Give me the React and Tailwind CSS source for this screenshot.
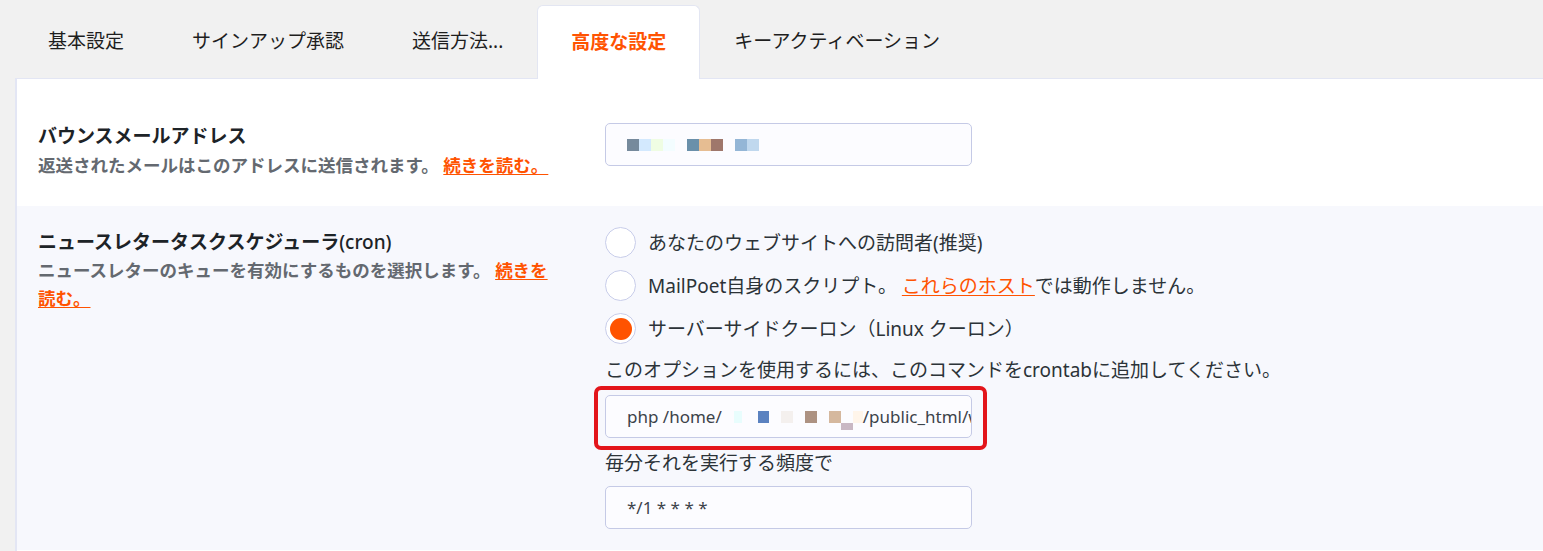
import React from "react";

const font = { fontFamily: '"Noto Sans", "Noto Sans CJK JP", sans-serif' };

const tabs = ["基本設定", "サインアップ承認", "送信方法...", "高度な設定", "キーアクティベーション"];

function Px({ c, w = "w-[12px]", h = "h-[12px]", className = "" }) {
  return <span className={`inline-block shrink-0 ${w} ${h} ${className}`} style={{ background: c }} />;
}

function Gap({ w = "w-[12px]" }) {
  return <span className={`inline-block shrink-0 ${w}`} />;
}

function Radio({ checked, children }) {
  return (
    <label className="flex items-center h-[43px] gap-[12px] cursor-pointer">
      <span className="w-[31px] h-[31px] rounded-full border border-[#c8cdea] bg-white flex items-center justify-center shrink-0">
        {checked && <span className="w-[22px] h-[22px] rounded-full bg-[#ff5301]" />}
      </span>
      <span className="text-[19px] text-[#2c3338] leading-[28px]">{children}</span>
    </label>
  );
}

export default function App() {
  return (
    <div className="min-h-screen bg-[#f1f1f1] overflow-hidden" style={font}>
      {/* Tabs */}
      <nav className="flex pl-[14px] pt-[5px]">
        {tabs.map((t) =>
          t === "高度な設定" ? (
            <div
              key={t}
              className="relative z-10 -mb-px h-[74px] px-[33px] flex items-center bg-white border border-b-0 border-[#e3e6f2] rounded-t-[6px] text-[19px] font-bold text-[#ff5301]"
            >
              {t}
            </div>
          ) : (
            <div key={t} className="h-[73px] px-[34px] flex items-center text-[19px] text-[#1e1e1e]">
              {t}
            </div>
          )
        )}
      </nav>

      {/* Panel */}
      <div className="ml-[15px] border-l-2 border-t border-[#e3e6f4] bg-white">
        {/* Bounce address */}
        <div className="flex h-[127px] pt-[43px] bg-white">
          <div className="w-[588px] pl-[21px] shrink-0">
            <h3 className="text-[19px] font-bold text-[#1d2327] leading-[29px]">バウンスメールアドレス</h3>
            <p className="text-[17.5px] font-semibold text-[#646970] leading-[29px]">
              返送されたメールはこのアドレスに送信されます。{" "}
              <a href="#" className="text-[#ff5301] underline underline-offset-2">続きを読む。</a>
            </p>
          </div>
          <div className="mt-[1px] w-[367px] h-[43px] rounded-[5px] border border-[#c5cae6] bg-[#fcfcff] flex items-center pl-[21px]">
            <Px c="#768a9c" />
            <Px c="#d3e9fe" />
            <Px c="#effde3" />
            <Px c="#f3fdff" />
            <Gap />
            <Px c="#6a90aa" />
            <Px c="#e6bd92" />
            <Px c="#9f776b" />
            <Gap />
            <Px c="#94b6d6" />
            <Px c="#c0d8ee" />
          </div>
        </div>

        {/* Cron */}
        <div className="flex bg-[#f7f8fd] pt-[15px] pb-[21px]">
          <div className="w-[588px] pl-[21px] pt-[7px] shrink-0">
            <h3 className="text-[19px] font-bold text-[#1d2327] leading-[28px]">
              ニュースレタータスクスケジューラ<span className="font-medium">(cron)</span>
            </h3>
            <p className="text-[17.5px] font-semibold text-[#646970] leading-[28px]">
              ニュースレターのキューを有効にするものを選択します。{" "}
              <a href="#" className="text-[#ff5301] underline underline-offset-2">
                続きを
                <br />
                読む。
              </a>
            </p>
          </div>
          <div className="flex flex-col">
            <Radio>あなたのウェブサイトへの訪問者(推奨)</Radio>
            <Radio>
              MailPoet自身のスクリプト。{" "}
              <a href="#" className="text-[#ff5301] underline underline-offset-2">これらのホスト</a>では動作しません。
            </Radio>
            <Radio checked>サーバーサイドクーロン（Linux クーロン）</Radio>

            <p className="mt-[6px] text-[19px] text-[#2c3338] leading-[28px]">
              このオプションを使用するには、このコマンドをcrontabに追加してください。
            </p>

            <div className="relative mt-[11px] w-[367px]">
              <div className="h-[43px] rounded-[5px] border border-[#c5cae6] bg-[#fcfcff] flex items-center pl-[21px] overflow-hidden whitespace-nowrap text-[17px] text-[#3c434a]">
                <span className="shrink-0">php /home/</span>
                <Gap />
                <Px c="#e8fdfd" w="w-[8px]" />
                <Gap w="w-[16px]" />
                <Px c="#5b82c0" w="w-[11px]" />
                <Gap />
                <Px c="#f4f0ee" />
                <Gap />
                <Px c="#ad9282" />
                <Gap />
                <Px c="#d5b89e" />
                <Px c="#c9b8c4" h="h-[7px]" className="mt-[19px]" />
                <Px c="#fff5ea" w="w-[10px]" />
                <span className="shrink-0">/public_html/wp-content/plugins/mailpoet/mailpoet-cron.php</span>
              </div>
              <div className="absolute -left-[11px] -top-[9px] -right-[15px] -bottom-[12px] rounded-[7px] border-[4px] border-[#e3151b] pointer-events-none" />
            </div>

            <p className="mt-[11px] text-[19px] text-[#2c3338] leading-[28px]">毎分それを実行する頻度で</p>

            <div className="mt-[9px] w-[367px] h-[43px] rounded-[5px] border border-[#c5cae6] bg-[#fcfcff] flex items-center pl-[21px] text-[17px] text-[#3c434a]">
              */1 * * * *
            </div>
          </div>
        </div>
        <div className="h-[20px] bg-white" />
      </div>
    </div>
  );
}
